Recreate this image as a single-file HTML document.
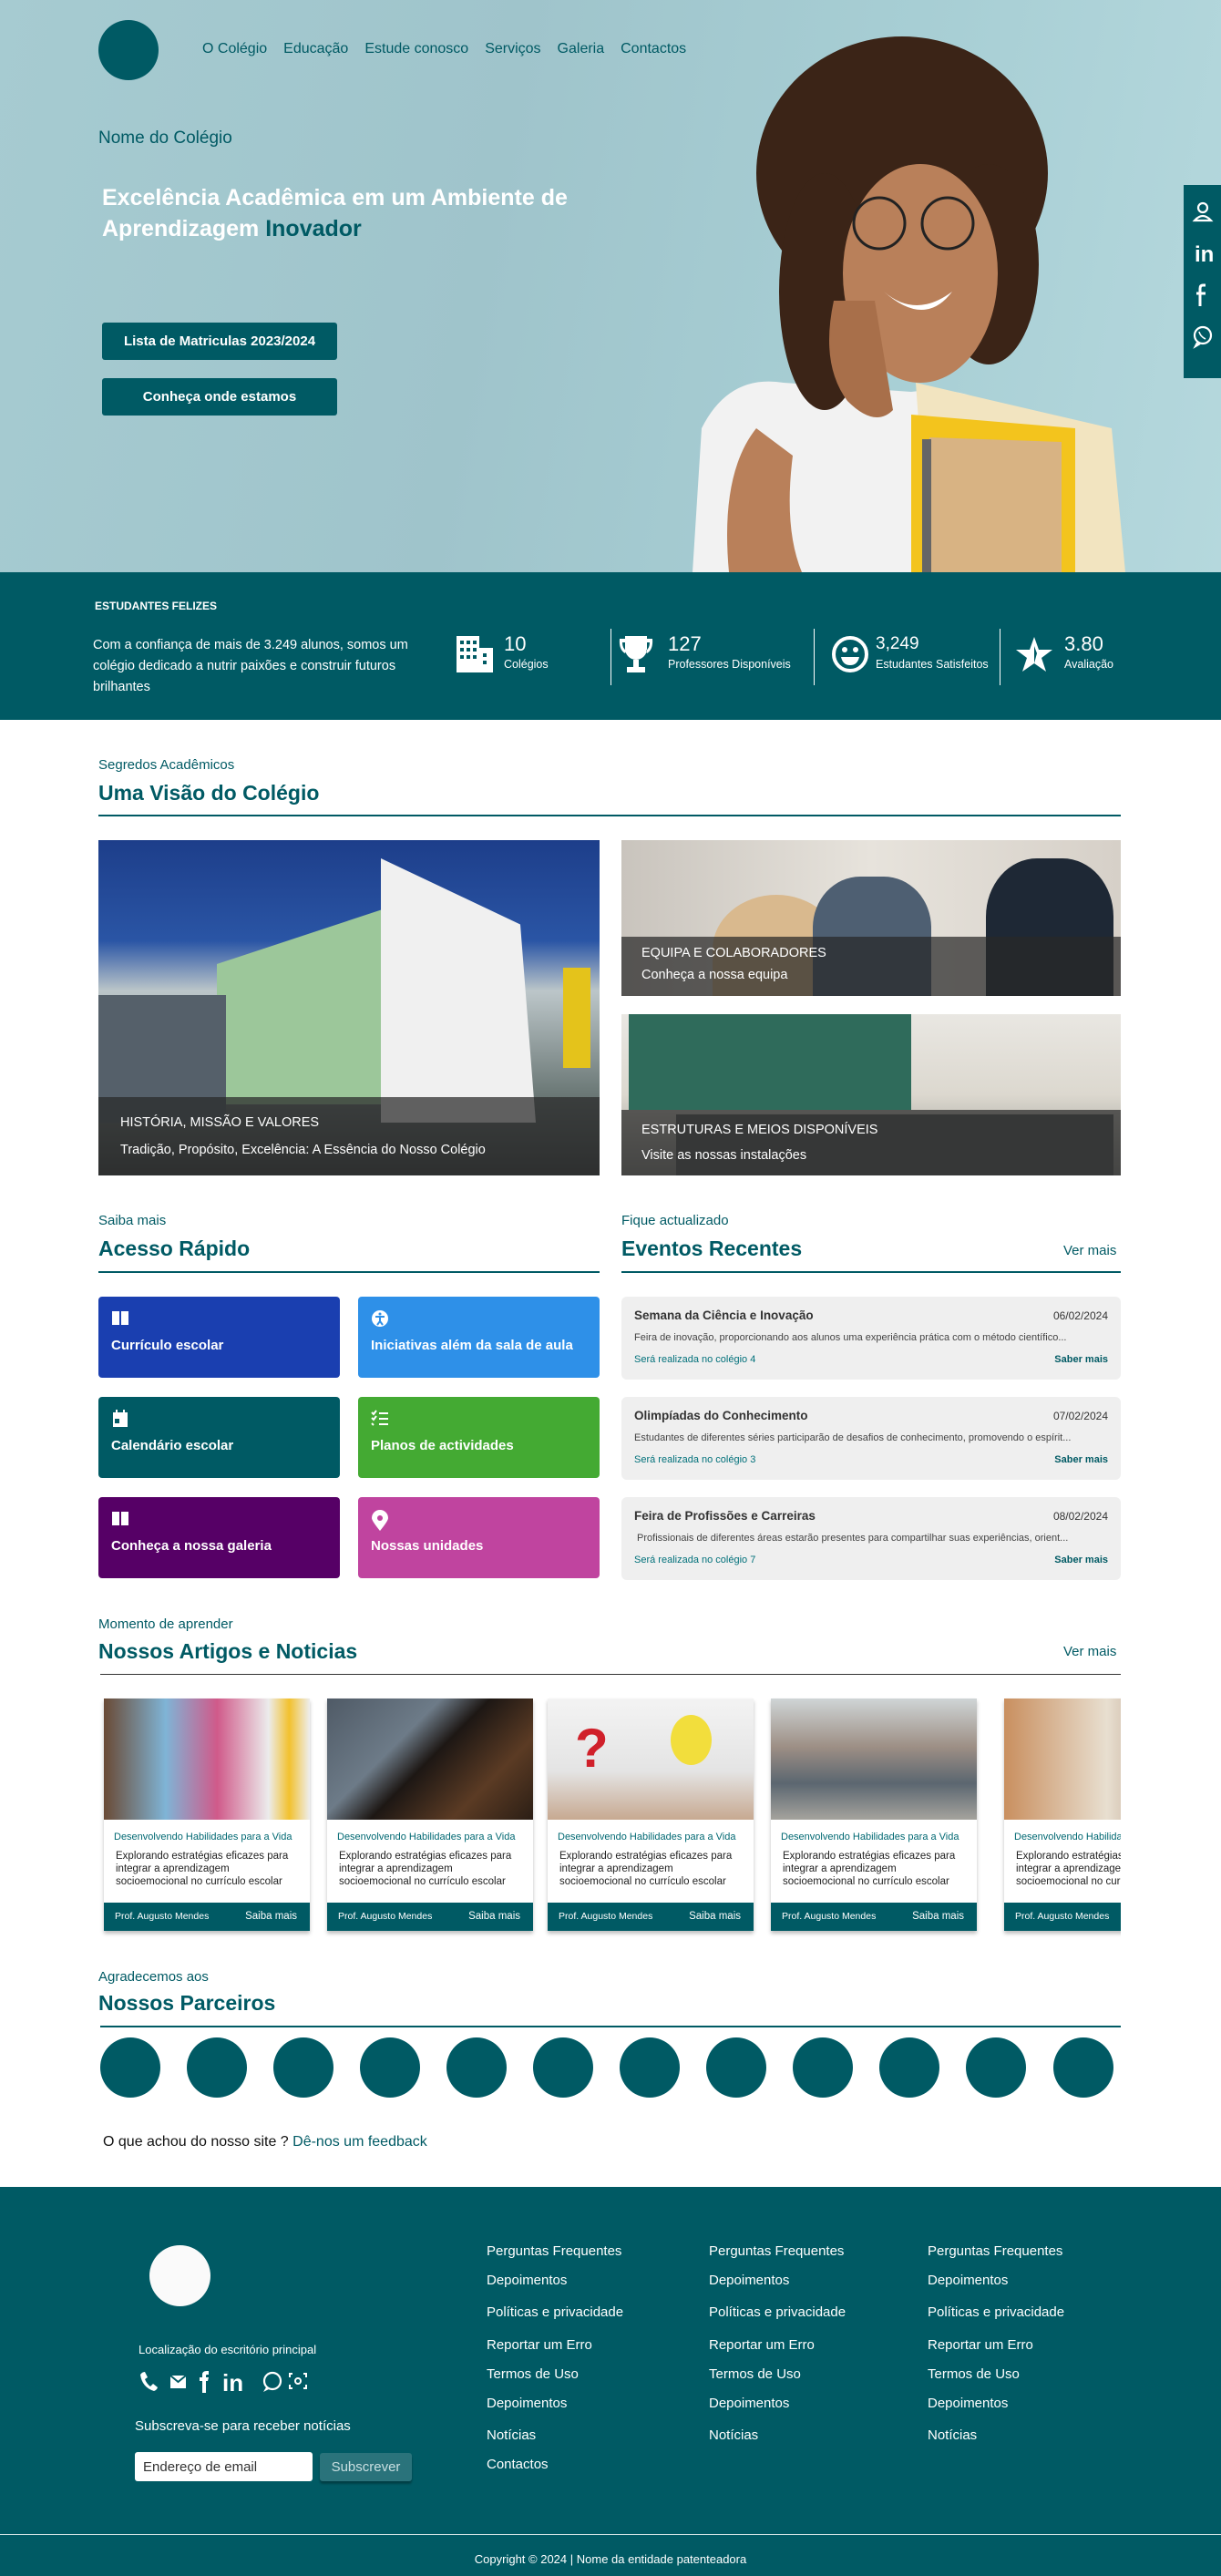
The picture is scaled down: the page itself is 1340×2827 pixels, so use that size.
<!DOCTYPE html>
<html><head><meta charset="utf-8">
<style>
*{margin:0;padding:0;box-sizing:border-box}
body{width:1340px;height:2827px;position:relative;font-family:"Liberation Sans",sans-serif;background:#fff;overflow:hidden}
.a{position:absolute}
.teal{color:#005a64}
.nav a{color:#005a64;font-size:16px;text-decoration:none;margin-right:18px}
.btn{position:absolute;left:112px;width:258px;height:41px;background:#005a64;color:#fff;font-weight:bold;font-size:15px;text-align:center;line-height:41px;border-radius:3px}
.sub{font-size:15px;color:#005a64}
.ttl{font-size:23px;color:#005a64;font-weight:bold}
.line{position:absolute;height:2px;background:#005a64}
.tile{position:absolute;width:265px;height:89px;border-radius:4px;color:#fff;font-size:15px;font-weight:bold}
.tile .ic{position:absolute;left:14px;top:14px}
.tile .t{position:absolute;left:14px;top:45px}
.ev{position:absolute;left:682px;width:548px;height:91px;background:#efefef;border-radius:6px;font-size:12.5px}
.ev .h{position:absolute;left:14px;top:13px;font-size:13.5px;font-weight:bold;color:#333}
.ev .d{position:absolute;right:14px;top:14px;color:#333;font-size:12px}
.ev .p{position:absolute;left:14px;top:39px;color:#444;font-size:11px;white-space:nowrap;width:520px;overflow:hidden}
.ev .r{position:absolute;left:14px;top:63px;color:#00707a;font-size:11px}
.ev .s{position:absolute;right:14px;top:63px;color:#005a64;font-weight:bold;font-size:11px}
.card{position:absolute;top:1864px;width:226px;height:255px;background:#fff;box-shadow:0 3px 4px rgba(0,0,0,.25);overflow:hidden}
.card .im{height:133px;position:relative}
.card .h{position:absolute;left:11px;top:146px;font-size:11px;color:#006872;white-space:nowrap}
.card .p{position:absolute;left:13px;top:166px;font-size:11.5px;color:#222;line-height:14px;width:205px}
.card .f{position:absolute;left:0;top:224px;width:100%;height:31px;background:#005a64;color:#fff;font-size:10.5px}
.card .f span{position:absolute;top:9px}
.circ{position:absolute;top:2236px;width:66px;height:66px;border-radius:50%;background:#005a64}
.fl{position:absolute;color:#fff;font-size:15px}
.cap{position:absolute;left:0;width:100%;background:rgba(40,40,40,.72);color:#fff}
</style></head><body>

<!-- HERO -->
<div class="a" style="left:0;top:0;width:1340px;height:628px;background:linear-gradient(100deg,#a6cbd1 0%,#9fc4cb 40%,#a7ced4 70%,#b5d8dd 100%)"></div>
<svg class="a" style="left:700px;top:0" width="640" height="628" viewBox="700 0 640 628">
 <path d="M760 628 L770 470 Q800 410 860 420 L1000 430 Q1080 420 1110 470 L1150 628Z" fill="#f2f2f2"/>
 <path d="M800 628 Q790 520 830 470 L870 500 Q860 580 880 628Z" fill="#b9805a"/>
 <path d="M1060 628 L1130 628 L1120 560Q1100 540 1060 560Z" fill="#b57b55"/>
 <ellipse cx="990" cy="190" rx="160" ry="150" fill="#3b2417"/>
 <ellipse cx="905" cy="320" rx="50" ry="130" fill="#3b2417"/>
 <ellipse cx="1085" cy="290" rx="55" ry="110" fill="#3b2417"/>
 <ellipse cx="1010" cy="300" rx="85" ry="120" fill="#b9805a"/>
 <path d="M915 330 Q900 400 930 440 Q960 470 980 450 L960 330Z" fill="#a86f4a"/>
 <circle cx="965" cy="245" r="28" fill="none" stroke="#222" stroke-width="3"/>
 <circle cx="1040" cy="245" r="28" fill="none" stroke="#222" stroke-width="3"/>
 <path d="M970 320 Q1005 350 1045 320 Q1015 360 970 320Z" fill="#fff"/>
 <path d="M1005 420 L1220 470 L1235 628 L1020 628Z" fill="#f2e4c0"/>
 <path d="M1000 455 L1180 470 L1180 628 L1000 628Z" fill="#f3c41d"/>
 <path d="M1020 480 L1165 485 L1165 628 L1020 628Z" fill="#d8b383"/>
 <path d="M1012 482 L1022 482 L1022 628 L1012 628Z" fill="#666"/>
</svg>
<div class="a" style="left:108px;top:22px;width:66px;height:66px;border-radius:50%;background:#005a64"></div>
<div class="a nav" style="left:222px;top:45px"><a>O Colégio</a><a>Educação</a><a>Estude conosco</a><a>Serviços</a><a>Galeria</a><a>Contactos</a></div>
<div class="a teal" style="left:108px;top:141px;font-size:19px">Nome do Colégio</div>
<div class="a" style="left:112px;top:200px;font-size:25px;font-weight:bold;color:#fff;line-height:34px">Excelência Acadêmica em um Ambiente de<br>Aprendizagem <span style="color:#005a64">Inovador</span></div>
<div class="btn" style="top:354px">Lista de Matriculas 2023/2024</div>
<div class="btn" style="top:415px">Conheça onde estamos</div>
<div class="a" style="left:1299px;top:203px;width:41px;height:212px;background:#005a64"></div>
<svg class="a" style="left:1306px;top:218px" width="28" height="180" viewBox="0 0 28 180" fill="none" stroke="#fff" stroke-width="2.2">
 <circle cx="14" cy="10" r="5"/><path d="M5 24 Q14 14 23 24 Z"/>
 <text x="5" y="69" fill="#fff" stroke="none" font-size="24" font-weight="bold" font-family="Liberation Sans">in</text>
 <path d="M17 95 L14 95 Q11 95 11 99 L11 118 M7 104 L17 104" stroke-width="3"/>
 <circle cx="14" cy="150" r="9"/><path d="M8 158 L6 162 L11 159"/><path d="M10 146q1 5 7 8" stroke-width="1.6"/>
</svg>

<!-- STATS -->
<div class="a" style="left:0;top:628px;width:1340px;height:162px;background:#005a64"></div>
<div class="a" style="left:104px;top:658px;color:#fff;font-weight:bold;font-size:12px">ESTUDANTES FELIZES</div>
<div class="a" style="left:102px;top:697px;color:#fff;font-size:14.5px;line-height:23px;width:355px">Com a confiança de mais de 3.249 alunos, somos um colégio dedicado a nutrir paixões e construir futuros brilhantes</div>
<svg class="a" style="left:500px;top:697px" width="42" height="42" viewBox="0 0 42 42" fill="#fff"><path d="M1 1h25v40H1zM26 14h15v27H26z"/><g fill="#005a64"><rect x="5" y="6" width="4" height="4"/><rect x="12" y="6" width="4" height="4"/><rect x="19" y="6" width="4" height="4"/><rect x="5" y="14" width="4" height="4"/><rect x="12" y="14" width="4" height="4"/><rect x="19" y="14" width="4" height="4"/><rect x="5" y="22" width="4" height="4"/><rect x="12" y="22" width="4" height="4"/><rect x="19" y="22" width="4" height="4"/><rect x="30" y="20" width="4" height="4"/><rect x="30" y="28" width="4" height="4"/></g></svg>
<div class="a" style="left:553px;top:694px;color:#fff;font-size:22px">10</div>
<div class="a" style="left:553px;top:722px;color:#fff;font-size:12.5px">Colégios</div>
<div class="a" style="left:670px;top:690px;width:1px;height:62px;background:#fff"></div>
<svg class="a" style="left:678px;top:697px" width="40" height="42" viewBox="0 0 40 42" fill="#fff"><path d="M8 1h24v14a12 12 0 0 1-24 0z M2 4h6v4H5q0 6 4 9l-1 3Q1 16 2 4z M38 4h-6v4h3q0 6-4 9l1 3q7-4 6-16z M17 27h6v8h-6z M10 35h20v6H10z"/></svg>
<div class="a" style="left:733px;top:694px;color:#fff;font-size:22px">127</div>
<div class="a" style="left:733px;top:722px;color:#fff;font-size:12.5px">Professores Disponíveis</div>
<div class="a" style="left:893px;top:690px;width:1px;height:62px;background:#fff"></div>
<svg class="a" style="left:912px;top:697px" width="42" height="42" viewBox="0 0 42 42"><circle cx="21" cy="21" r="18" fill="none" stroke="#fff" stroke-width="4"/><circle cx="15" cy="16" r="3" fill="#fff"/><circle cx="27" cy="16" r="3" fill="#fff"/><path d="M11 24h20q-2 9-10 9t-10-9z" fill="#fff"/></svg>
<div class="a" style="left:961px;top:696px;color:#fff;font-size:19px">3,249</div>
<div class="a" style="left:961px;top:722px;color:#fff;font-size:12.5px">Estudantes Satisfeitos</div>
<div class="a" style="left:1097px;top:690px;width:1px;height:62px;background:#fff"></div>
<svg class="a" style="left:1114px;top:697px" width="42" height="42" viewBox="0 0 42 42"><path d="M21 2l5 14h15l-12 9 5 15-13-9-13 9 5-15L1 16h15z" fill="#fff"/><path d="M21 12l3 8 -3 11z" fill="#005a64"/></svg>
<div class="a" style="left:1168px;top:694px;color:#fff;font-size:22px">3.80</div>
<div class="a" style="left:1168px;top:722px;color:#fff;font-size:12.5px">Avaliação</div>

<!-- VISAO -->
<div class="a sub" style="left:108px;top:831px">Segredos Acadêmicos</div>
<div class="a ttl" style="left:108px;top:857px">Uma Visão do Colégio</div>
<div class="line" style="left:108px;top:894px;width:1122px"></div>
<div class="a" style="left:108px;top:922px;width:550px;height:368px;overflow:hidden;background:linear-gradient(180deg,#1d3e8a 0%,#2a55a5 30%,#bcc6c9 45%,#6d7a78 75%,#3e4343 100%)">
 <div class="a" style="left:130px;top:70px;width:200px;height:220px;background:#9cc79a;clip-path:polygon(0 30%,100% 0,100% 100%,0 100%)"></div>
 <div class="a" style="left:310px;top:20px;width:170px;height:290px;background:#f0f0f0;clip-path:polygon(0 0,90% 25%,100% 100%,0 100%)"></div>
 <div class="a" style="left:0;top:170px;width:140px;height:140px;background:#55606a"></div>
 <div class="a" style="left:510px;top:140px;width:30px;height:110px;background:#e4c31b"></div>
 <div class="cap" style="top:282px;height:86px"><div class="a" style="left:24px;top:20px;font-size:14.5px">HISTÓRIA, MISSÃO E VALORES</div><div class="a" style="left:24px;top:50px;font-size:14.5px">Tradição, Propósito, Excelência: A Essência do Nosso Colégio</div></div>
</div>
<div class="a" style="left:682px;top:922px;width:548px;height:171px;overflow:hidden;background:linear-gradient(90deg,#c9c4bd,#e7e3dc 50%,#d6d0c8)">
 <div class="a" style="left:100px;top:60px;width:140px;height:120px;background:#d9b98e;border-radius:50% 50% 0 0"></div>
 <div class="a" style="left:210px;top:40px;width:130px;height:140px;background:#4e5f72;border-radius:40% 40% 0 0"></div>
 <div class="a" style="left:400px;top:20px;width:140px;height:160px;background:#1e2835;border-radius:40% 40% 0 0"></div>
 <div class="cap" style="top:106px;height:65px"><div class="a" style="left:22px;top:10px;font-size:14.5px">EQUIPA E COLABORADORES</div><div class="a" style="left:22px;top:34px;font-size:14.5px">Conheça a nossa equipa</div></div>
</div>
<div class="a" style="left:682px;top:1113px;width:548px;height:177px;overflow:hidden;background:linear-gradient(180deg,#e9e7e2 0%,#dcd8cf 50%,#8e8f8a 100%)">
 <div class="a" style="left:8px;top:0;width:310px;height:105px;background:#2f6b5b"></div>
 <div class="a" style="left:60px;top:110px;width:480px;height:70px;background:#5c5f5e"></div>
 <div class="cap" style="top:105px;height:72px"><div class="a" style="left:22px;top:14px;font-size:14.5px">ESTRUTURAS E MEIOS DISPONÍVEIS</div><div class="a" style="left:22px;top:42px;font-size:14.5px">Visite as nossas instalações</div></div>
</div>

<!-- ACESSO -->
<div class="a sub" style="left:108px;top:1331px">Saiba mais</div>
<div class="a ttl" style="left:108px;top:1357px">Acesso Rápido</div>
<div class="line" style="left:108px;top:1395px;width:550px"></div>
<div class="a sub" style="left:682px;top:1331px">Fique actualizado</div>
<div class="a ttl" style="left:682px;top:1357px">Eventos Recentes</div>
<div class="a sub" style="left:1167px;top:1364px">Ver mais</div>
<div class="line" style="left:682px;top:1395px;width:548px"></div>

<div class="tile" style="left:108px;top:1423px;background:#1a3fb0"><svg class="ic" width="20" height="18" viewBox="0 0 20 18" fill="#fff"><path d="M1 2h8v15H1zM11 2h8v15h-8z"/></svg><div class="t">Currículo escolar</div></div>
<div class="tile" style="left:393px;top:1423px;background:#2e90e8"><svg class="ic" width="20" height="20" viewBox="0 0 20 20"><circle cx="10" cy="10" r="9" fill="#fff"/><path d="M5 8h10M10 8v5l-3 4M10 13l3 4" stroke="#2e90e8" stroke-width="2" fill="none"/><circle cx="10" cy="5" r="1.5" fill="#2e90e8"/></svg><div class="t">Iniciativas além da sala de aula</div></div>
<div class="tile" style="left:108px;top:1533px;background:#005a64"><svg class="ic" width="20" height="20" viewBox="0 0 20 20" fill="#fff"><path d="M2 3h16v16H2z"/><rect x="5" y="0" width="2" height="4"/><rect x="13" y="0" width="2" height="4"/><rect x="4" y="10" width="5" height="5" fill="#005a64"/></svg><div class="t">Calendário escolar</div></div>
<div class="tile" style="left:393px;top:1533px;background:#44aa33"><svg class="ic" width="20" height="18" viewBox="0 0 20 18" stroke="#fff" stroke-width="2" fill="none"><path d="M1 3l2 2 3-4M1 9l2 2 3-4M1 15l2 2M9 4h10M9 10h10M9 16h10"/></svg><div class="t">Planos de actividades</div></div>
<div class="tile" style="left:108px;top:1643px;background:#560066"><svg class="ic" width="20" height="18" viewBox="0 0 20 18" fill="#fff"><path d="M1 2h8v15H1zM11 2h8v15h-8z"/></svg><div class="t">Conheça a nossa galeria</div></div>
<div class="tile" style="left:393px;top:1643px;background:#c0449f"><svg class="ic" width="20" height="24" viewBox="0 0 20 24"><path d="M10 23Q1 12 1 9a9 9 0 0 1 18 0q0 3-9 14z" fill="#fff"/><circle cx="10" cy="9" r="3" fill="#c0449f"/></svg><div class="t">Nossas unidades</div></div>

<div class="ev" style="top:1423px"><div class="h">Semana da Ciência e Inovação</div><div class="d">06/02/2024</div><div class="p">Feira de inovação, proporcionando aos alunos uma experiência prática com o método científico...</div><div class="r">Será realizada no colégio 4</div><div class="s">Saber mais</div></div>
<div class="ev" style="top:1533px"><div class="h">Olimpíadas do Conhecimento</div><div class="d">07/02/2024</div><div class="p">Estudantes de diferentes séries participarão de desafios de conhecimento, promovendo o espírit...</div><div class="r">Será realizada no colégio 3</div><div class="s">Saber mais</div></div>
<div class="ev" style="top:1643px"><div class="h">Feira de Profissões e Carreiras</div><div class="d">08/02/2024</div><div class="p">&nbsp;Profissionais de diferentes áreas estarão presentes para compartilhar suas experiências, orient...</div><div class="r">Será realizada no colégio 7</div><div class="s">Saber mais</div></div>

<!-- ARTIGOS -->
<div class="a sub" style="left:108px;top:1774px">Momento de aprender</div>
<div class="a ttl" style="left:108px;top:1799px">Nossos Artigos e Noticias</div>
<div class="a sub" style="left:1167px;top:1804px">Ver mais</div>
<div class="line" style="left:110px;top:1837px;width:1120px;height:1px;background:#333"></div>
<div class="a" style="left:0;top:1860px;width:1230px;height:270px;overflow:hidden">
<div class="card" style="left:114px;top:4px"><div class="im" style="background:linear-gradient(90deg,#6a4a35 0%,#7fb4d6 30%,#d05a8a 55%,#ececec 80%,#f2c12e 90%,#eee)"></div><div class="h">Desenvolvendo Habilidades para a Vida</div><div class="p">Explorando estratégias eficazes para integrar a aprendizagem socioemocional no currículo escolar</div><div class="f"><span style="left:12px">Prof. Augusto Mendes</span><span style="right:14px;font-size:11.5px">Saiba mais</span></div></div>
<div class="card" style="left:359px;top:4px"><div class="im" style="background:linear-gradient(135deg,#4f5a66 0%,#6d7b88 35%,#1d1714 50%,#5b3b24 75%,#2b1e15 100%)"></div><div class="h">Desenvolvendo Habilidades para a Vida</div><div class="p">Explorando estratégias eficazes para integrar a aprendizagem socioemocional no currículo escolar</div><div class="f"><span style="left:12px">Prof. Augusto Mendes</span><span style="right:14px;font-size:11.5px">Saiba mais</span></div></div>
<div class="card" style="left:601px;top:4px"><div class="im" style="background:linear-gradient(180deg,#f3f3f3 0%,#e4e4e4 60%,#c7a991 100%)"><div style="position:absolute;left:30px;top:20px;font-size:60px;color:#d0202a;font-weight:bold">?</div><div style="position:absolute;left:135px;top:18px;width:45px;height:55px;border-radius:50%;background:#f2de3c"></div></div><div class="h">Desenvolvendo Habilidades para a Vida</div><div class="p">Explorando estratégias eficazes para integrar a aprendizagem socioemocional no currículo escolar</div><div class="f"><span style="left:12px">Prof. Augusto Mendes</span><span style="right:14px;font-size:11.5px">Saiba mais</span></div></div>
<div class="card" style="left:846px;top:4px"><div class="im" style="background:linear-gradient(180deg,#cfd5d6 0%,#9d8f85 40%,#5b6670 70%,#a5a39d 100%)"></div><div class="h">Desenvolvendo Habilidades para a Vida</div><div class="p">Explorando estratégias eficazes para integrar a aprendizagem socioemocional no currículo escolar</div><div class="f"><span style="left:12px">Prof. Augusto Mendes</span><span style="right:14px;font-size:11.5px">Saiba mais</span></div></div>
<div class="card" style="left:1102px;top:4px"><div class="im" style="background:linear-gradient(90deg,#c98f5f,#e8dfd0 50%,#8a5a40)"></div><div class="h">Desenvolvendo Habilidades para a Vida</div><div class="p">Explorando estratégias eficazes para integrar a aprendizagem socioemocional no currículo escolar</div><div class="f"><span style="left:12px">Prof. Augusto Mendes</span><span style="right:14px;font-size:11.5px">Saiba mais</span></div></div>
</div>

<!-- PARCEIROS -->
<div class="a sub" style="left:108px;top:2161px">Agradecemos aos</div>
<div class="a ttl" style="left:108px;top:2185px">Nossos Parceiros</div>
<div class="line" style="left:110px;top:2223px;width:1120px;height:1.5px"></div>
<div class="circ" style="left:110px"></div><div class="circ" style="left:205px"></div><div class="circ" style="left:300px"></div><div class="circ" style="left:395px"></div><div class="circ" style="left:490px"></div><div class="circ" style="left:585px"></div><div class="circ" style="left:680px"></div><div class="circ" style="left:775px"></div><div class="circ" style="left:870px"></div><div class="circ" style="left:965px"></div><div class="circ" style="left:1060px"></div><div class="circ" style="left:1156px"></div>
<div class="a" style="left:113px;top:2342px;font-size:16px;color:#111">O que achou do nosso site ? <span style="color:#005a64">Dê-nos um feedback</span></div>

<!-- FOOTER -->
<div class="a" style="left:0;top:2400px;width:1340px;height:427px;background:#005a64"></div>
<div class="a" style="left:164px;top:2464px;width:67px;height:67px;border-radius:50%;background:#fafafa"></div>
<div class="a" style="left:152px;top:2571px;color:#fff;font-size:13px">Localização do escritório principal</div>
<svg class="a" style="left:152px;top:2600px" width="195" height="28" viewBox="0 0 195 28" fill="#fff">
 <path d="M2 6q2-3 5-3l3 6-3 2q2 5 6 8l3-3 5 4q-1 3-4 4Q4 20 2 6z"/>
 <path d="M35 7h17v14H35z"/><path d="M35 7l8.5 7 8.5-7" stroke="#005a64" stroke-width="2" fill="none"/>
 <path d="M70 26V13h-3v-4h3V6q0-4 5-4h2v4h-2q-1 0-1 1v2h3l-1 4h-2v13z"/>
 <text x="92" y="24" font-size="26" font-weight="bold" font-family="Liberation Sans">in</text>
 <circle cx="147" cy="13" r="9" fill="none" stroke="#fff" stroke-width="2.2"/><path d="M140 20l-3 5 6-3z"/>
 <path d="M169 5h-3v4M181 5h3v4M169 21h-3v-4M181 21h3v-4" stroke="#fff" stroke-width="2" fill="none"/><circle cx="175" cy="13" r="3" fill="none" stroke="#fff" stroke-width="2"/>
</svg>
<div class="a" style="left:148px;top:2654px;color:#fff;font-size:15px">Subscreva-se para receber notícias</div>
<div class="a" style="left:148px;top:2691px;width:195px;height:32px;background:#fff;border-radius:3px;font-size:15px;color:#333;padding:8px 0 0 9px">Endereço de email</div>
<div class="a" style="left:351px;top:2692px;width:101px;height:31px;background:#2a737b;border-radius:3px;color:#c9dfe1;font-size:15px;text-align:center;line-height:31px;box-shadow:0 3px 2px rgba(0,0,0,.3)">Subscrever</div>
<div class="fl" style="left:534px;top:2462px">Perguntas Frequentes</div><div class="fl" style="left:534px;top:2494px">Depoimentos</div><div class="fl" style="left:534px;top:2529px">Políticas e privacidade</div><div class="fl" style="left:534px;top:2565px">Reportar um Erro</div><div class="fl" style="left:534px;top:2597px">Termos de Uso</div><div class="fl" style="left:534px;top:2629px">Depoimentos</div><div class="fl" style="left:534px;top:2664px">Notícias</div><div class="fl" style="left:534px;top:2696px">Contactos</div>
<div class="fl" style="left:778px;top:2462px">Perguntas Frequentes</div><div class="fl" style="left:778px;top:2494px">Depoimentos</div><div class="fl" style="left:778px;top:2529px">Políticas e privacidade</div><div class="fl" style="left:778px;top:2565px">Reportar um Erro</div><div class="fl" style="left:778px;top:2597px">Termos de Uso</div><div class="fl" style="left:778px;top:2629px">Depoimentos</div><div class="fl" style="left:778px;top:2664px">Notícias</div>
<div class="fl" style="left:1018px;top:2462px">Perguntas Frequentes</div><div class="fl" style="left:1018px;top:2494px">Depoimentos</div><div class="fl" style="left:1018px;top:2529px">Políticas e privacidade</div><div class="fl" style="left:1018px;top:2565px">Reportar um Erro</div><div class="fl" style="left:1018px;top:2597px">Termos de Uso</div><div class="fl" style="left:1018px;top:2629px">Depoimentos</div><div class="fl" style="left:1018px;top:2664px">Notícias</div>
<div class="a" style="left:0;top:2781px;width:1340px;height:1px;background:#d8e6e8"></div>
<div class="a" style="left:0;top:2801px;width:1340px;text-align:center;color:#fff;font-size:13px">Copyright © 2024 | Nome da entidade patenteadora</div>
</body></html>
